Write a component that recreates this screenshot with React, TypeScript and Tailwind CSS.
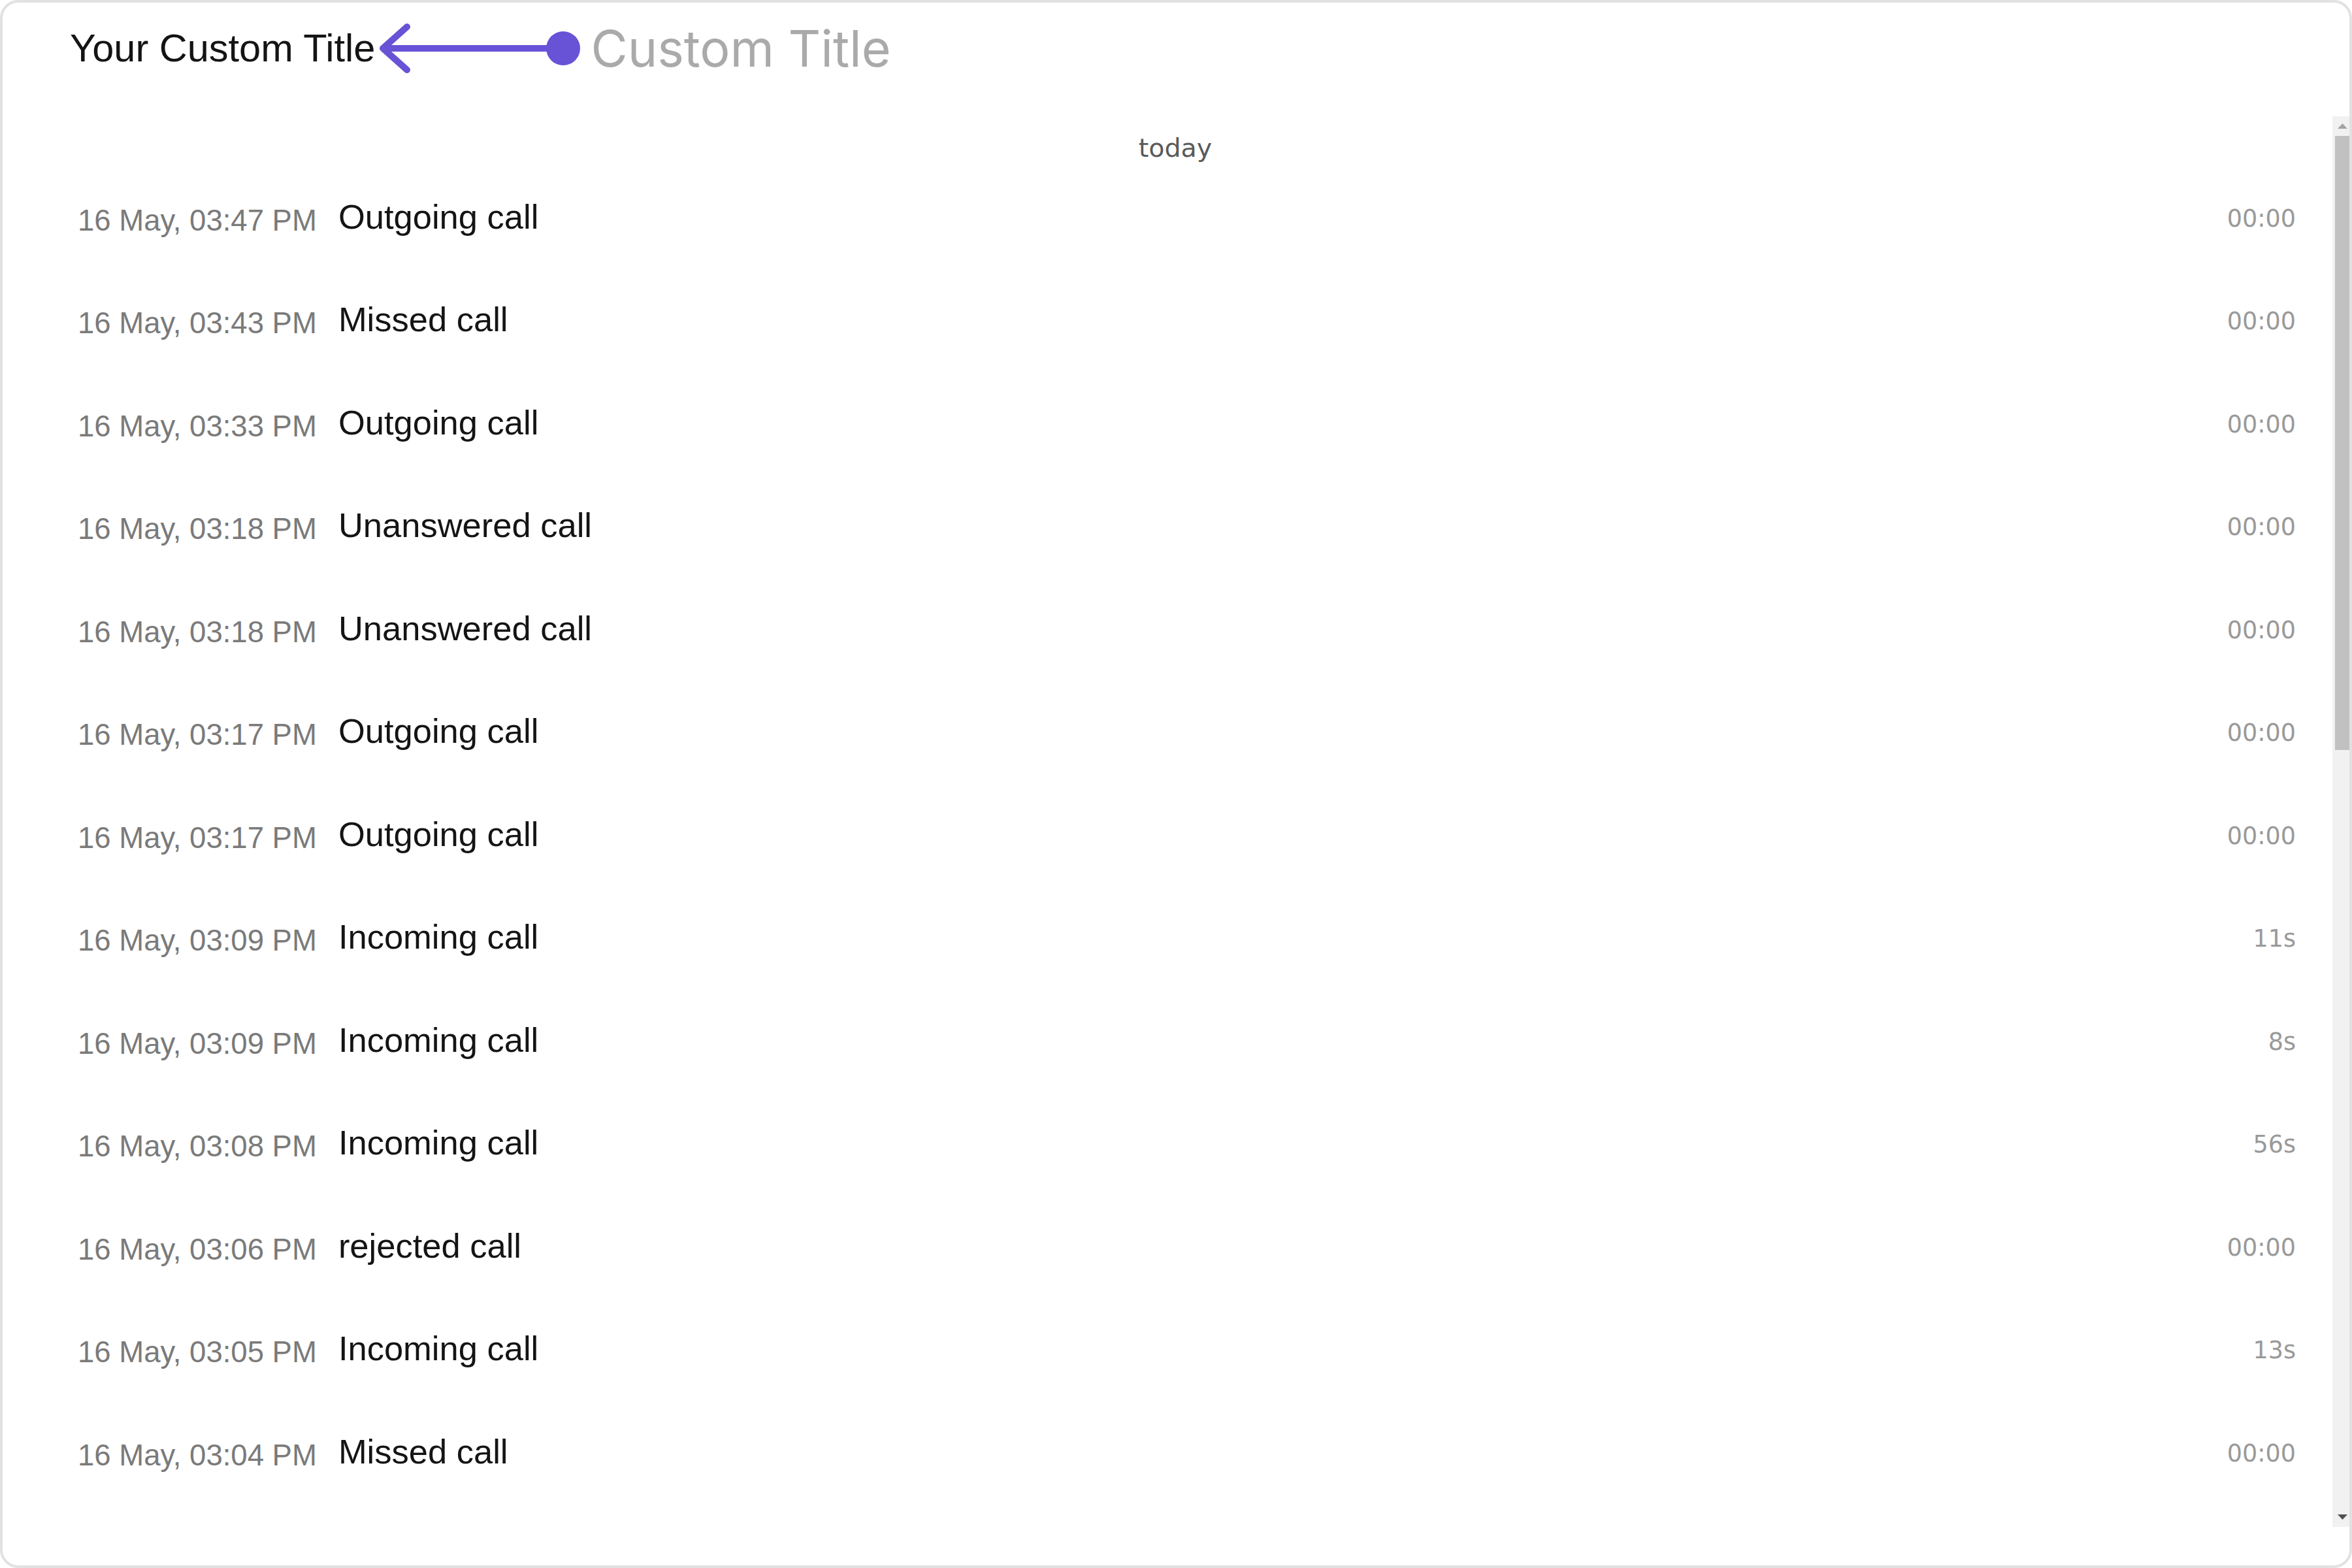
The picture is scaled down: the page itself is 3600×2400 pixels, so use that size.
import React from 'react';

const calls = [
  { time: '16 May, 03:47 PM', label: 'Outgoing call', duration: '00:00' },
  { time: '16 May, 03:43 PM', label: 'Missed call', duration: '00:00' },
  { time: '16 May, 03:33 PM', label: 'Outgoing call', duration: '00:00' },
  { time: '16 May, 03:18 PM', label: 'Unanswered call', duration: '00:00' },
  { time: '16 May, 03:18 PM', label: 'Unanswered call', duration: '00:00' },
  { time: '16 May, 03:17 PM', label: 'Outgoing call', duration: '00:00' },
  { time: '16 May, 03:17 PM', label: 'Outgoing call', duration: '00:00' },
  { time: '16 May, 03:09 PM', label: 'Incoming call', duration: '11s' },
  { time: '16 May, 03:09 PM', label: 'Incoming call', duration: '8s' },
  { time: '16 May, 03:08 PM', label: 'Incoming call', duration: '56s' },
  { time: '16 May, 03:06 PM', label: 'rejected call', duration: '00:00' },
  { time: '16 May, 03:05 PM', label: 'Incoming call', duration: '13s' },
  { time: '16 May, 03:04 PM', label: 'Missed call', duration: '00:00' },
];

const Pointer = () => (
  <svg width="312" height="80" viewBox="0 0 312 80" className="ml-[2px] shrink-0">
    <path
      d="M47 7 L10 40 L47 73 M10 40 L280 40"
      fill="none"
      stroke="#6852D6"
      strokeWidth="10"
      strokeLinecap="round"
      strokeLinejoin="round"
    />
    <circle cx="286" cy="40" r="26" fill="#6852D6" />
  </svg>
);

const Scrollbar = () => (
  <div className="w-[26px] shrink-0 bg-[#f1f1f1] flex flex-col">
    <div className="h-[30px] pl-[4px] flex items-center justify-center">
      <svg width="15" height="8" viewBox="0 0 15 8">
        <path d="M7.5 0 L15 8 L0 8 Z" fill="#a3a3a3" />
      </svg>
    </div>
    <div className="ml-[4px] h-[940px] bg-[#c1c1c1]" />
    <div className="flex-1" />
    <div className="h-[30px] pl-[4px] flex items-center justify-center">
      <svg width="15" height="8" viewBox="0 0 15 8">
        <path d="M0 0 L15 0 L7.5 8 Z" fill="#505050" />
      </svg>
    </div>
  </div>
);

const App = () => {
  return (
    <div className="w-[3600px] h-[2400px] bg-white">
      <div className="w-full h-full border-4 border-[#e1e1e1] rounded-[28px] flex flex-col overflow-hidden">
        {/* header */}
        <div className="h-[140px] flex items-center pl-[103px]">
          <span className="text-[59.5px] leading-none text-[#141414] font-['Liberation_Sans',Arial,sans-serif]">
            Your Custom Title
          </span>
          <Pointer />
          <span className="ml-[16px] text-[77px] leading-none text-[#aaaaaa] font-['Inter',sans-serif]">
            Custom Title
          </span>
        </div>

        {/* call list */}
        <div className="mt-[34px] h-[2159px] flex">
          <div className="flex-1 overflow-hidden">
            <div className="pt-[29px] pl-[24px] text-center text-[39.5px] leading-none text-[#5a5a5a] font-['DejaVu_Sans',sans-serif]">
              today
            </div>
            <div className="mt-[9.5px]">
              {calls.map((c, i) => (
                <div key={i} className="h-[157.5px] flex items-center pl-[115px] pr-[56px]">
                  <span className="mt-[5px] text-[45.5px] leading-none text-[#7a7a7a] font-['Liberation_Sans',Arial,sans-serif] whitespace-nowrap">
                    {c.time}
                  </span>
                  <span className="ml-[33px] mb-[6px] text-[52.5px] leading-none text-[#141414] font-['Liberation_Sans',Arial,sans-serif] whitespace-nowrap">
                    {c.label}
                  </span>
                  <span className="ml-auto text-[36.5px] leading-none text-[#999999] font-['DejaVu_Sans',sans-serif]">
                    {c.duration}
                  </span>
                </div>
              ))}
            </div>
          </div>
          <Scrollbar />
        </div>
      </div>
    </div>
  );
};

export default App;
